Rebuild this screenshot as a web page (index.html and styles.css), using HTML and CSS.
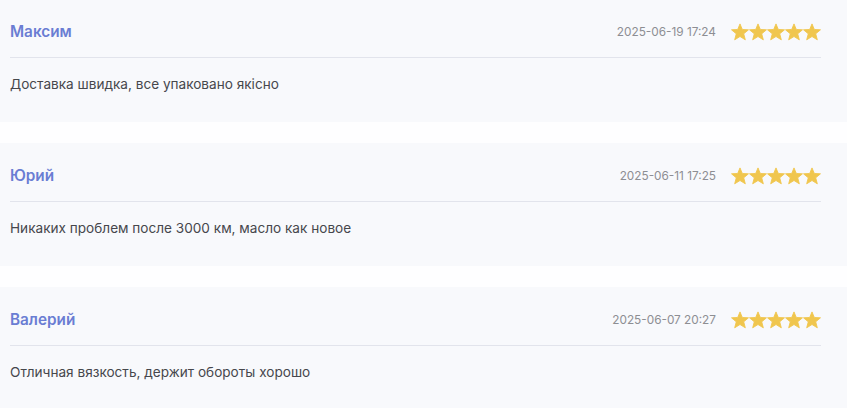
FILE: index.html
```html
<!DOCTYPE html>
<html lang="uk">
<head>
<meta charset="utf-8">
<link rel="stylesheet" href="styles.css">
</head>
<body>
<div class="reviews">
  <div class="review">
    <div class="review-head">
      <span class="name">Максим</span>
      <div class="meta">
        <span class="date">2025-06-19 17:24</span>
        <span class="stars">
          <svg viewBox="0 0 24 24"><path d="M12 1.2L15.06 8.59 23.3 9.1 16.95 14.41 19.1 22.4 12 18 4.9 22.4 7.05 14.41 0.7 9.1 8.94 8.59z"/></svg>
          <svg viewBox="0 0 24 24"><path d="M12 1.2L15.06 8.59 23.3 9.1 16.95 14.41 19.1 22.4 12 18 4.9 22.4 7.05 14.41 0.7 9.1 8.94 8.59z"/></svg>
          <svg viewBox="0 0 24 24"><path d="M12 1.2L15.06 8.59 23.3 9.1 16.95 14.41 19.1 22.4 12 18 4.9 22.4 7.05 14.41 0.7 9.1 8.94 8.59z"/></svg>
          <svg viewBox="0 0 24 24"><path d="M12 1.2L15.06 8.59 23.3 9.1 16.95 14.41 19.1 22.4 12 18 4.9 22.4 7.05 14.41 0.7 9.1 8.94 8.59z"/></svg>
          <svg viewBox="0 0 24 24"><path d="M12 1.2L15.06 8.59 23.3 9.1 16.95 14.41 19.1 22.4 12 18 4.9 22.4 7.05 14.41 0.7 9.1 8.94 8.59z"/></svg>
        </span>
      </div>
    </div>
    <p class="text">Доставка швидка, все упаковано якісно</p>
  </div>
  <div class="review">
    <div class="review-head">
      <span class="name">Юрий</span>
      <div class="meta">
        <span class="date">2025-06-11 17:25</span>
        <span class="stars">
          <svg viewBox="0 0 24 24"><path d="M12 1.2L15.06 8.59 23.3 9.1 16.95 14.41 19.1 22.4 12 18 4.9 22.4 7.05 14.41 0.7 9.1 8.94 8.59z"/></svg>
          <svg viewBox="0 0 24 24"><path d="M12 1.2L15.06 8.59 23.3 9.1 16.95 14.41 19.1 22.4 12 18 4.9 22.4 7.05 14.41 0.7 9.1 8.94 8.59z"/></svg>
          <svg viewBox="0 0 24 24"><path d="M12 1.2L15.06 8.59 23.3 9.1 16.95 14.41 19.1 22.4 12 18 4.9 22.4 7.05 14.41 0.7 9.1 8.94 8.59z"/></svg>
          <svg viewBox="0 0 24 24"><path d="M12 1.2L15.06 8.59 23.3 9.1 16.95 14.41 19.1 22.4 12 18 4.9 22.4 7.05 14.41 0.7 9.1 8.94 8.59z"/></svg>
          <svg viewBox="0 0 24 24"><path d="M12 1.2L15.06 8.59 23.3 9.1 16.95 14.41 19.1 22.4 12 18 4.9 22.4 7.05 14.41 0.7 9.1 8.94 8.59z"/></svg>
        </span>
      </div>
    </div>
    <p class="text">Никаких проблем после 3000 км, масло как новое</p>
  </div>
  <div class="review">
    <div class="review-head">
      <span class="name">Валерий</span>
      <div class="meta">
        <span class="date">2025-06-07 20:27</span>
        <span class="stars">
          <svg viewBox="0 0 24 24"><path d="M12 1.2L15.06 8.59 23.3 9.1 16.95 14.41 19.1 22.4 12 18 4.9 22.4 7.05 14.41 0.7 9.1 8.94 8.59z"/></svg>
          <svg viewBox="0 0 24 24"><path d="M12 1.2L15.06 8.59 23.3 9.1 16.95 14.41 19.1 22.4 12 18 4.9 22.4 7.05 14.41 0.7 9.1 8.94 8.59z"/></svg>
          <svg viewBox="0 0 24 24"><path d="M12 1.2L15.06 8.59 23.3 9.1 16.95 14.41 19.1 22.4 12 18 4.9 22.4 7.05 14.41 0.7 9.1 8.94 8.59z"/></svg>
          <svg viewBox="0 0 24 24"><path d="M12 1.2L15.06 8.59 23.3 9.1 16.95 14.41 19.1 22.4 12 18 4.9 22.4 7.05 14.41 0.7 9.1 8.94 8.59z"/></svg>
          <svg viewBox="0 0 24 24"><path d="M12 1.2L15.06 8.59 23.3 9.1 16.95 14.41 19.1 22.4 12 18 4.9 22.4 7.05 14.41 0.7 9.1 8.94 8.59z"/></svg>
        </span>
      </div>
    </div>
    <p class="text">Отличная вязкость, держит обороты хорошо</p>
  </div>
</div>
</body>
</html>
```
FILE: styles.css
```css
html, body {
  margin: 0;
  padding: 0;
  background: #fefeff;
  font-family: Inter, "Noto Sans", sans-serif;
}
.reviews {
  display: flex;
  flex-direction: column;
  gap: 21px;
  margin-top: -1px;
}
.review {
  background: #f8f9fc;
  padding: 0 26px 28px 10px;
}
.review-head {
  display: flex;
  justify-content: space-between;
  align-items: center;
  padding: 21px 0 13px;
  border-bottom: 1px solid #e2e4ec;
}
.name {
  font-size: 15.3px;
  line-height: 24px;
  font-weight: 600;
  color: #6a7dd3;
}
.meta {
  display: flex;
  align-items: center;
  gap: 15px;
}
.date {
  font-size: 11.8px;
  color: #8d8e93;
}
.stars {
  display: flex;
  fill: #f0c64e;
  stroke: #f0c64e;
  stroke-width: 1.2;
  stroke-linejoin: round;
}
.stars svg {
  width: 18px;
  height: 18px;
  display: block;
}
.text {
  margin: 16px 0 0;
  font-size: 13.6px;
  line-height: 20px;
  color: #46474c;
}
```
